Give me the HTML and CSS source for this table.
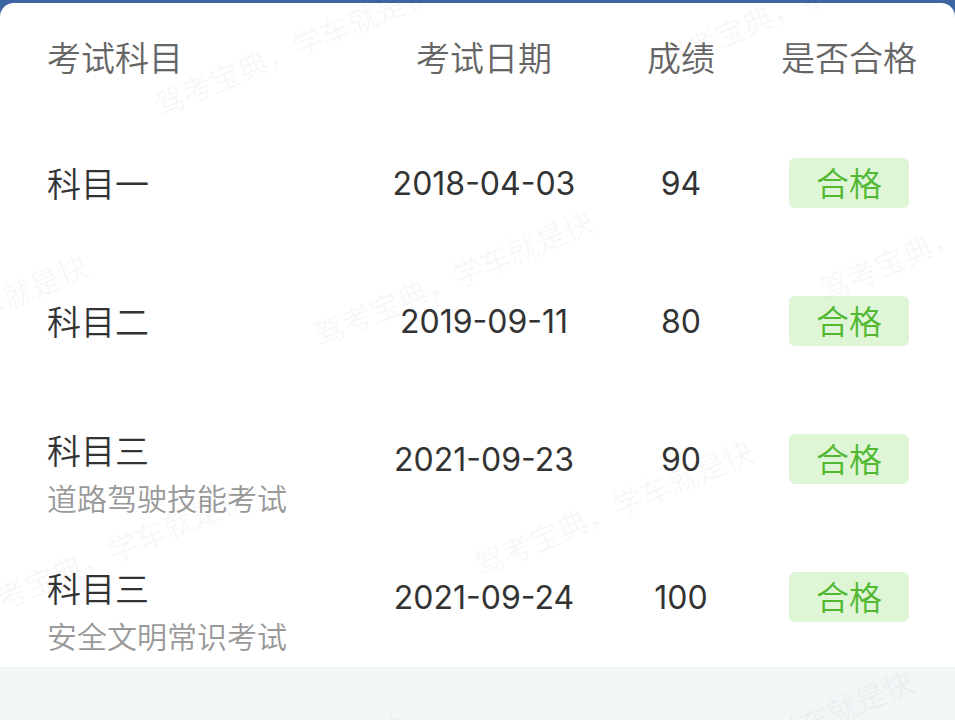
FILE: index.html
```html
<!DOCTYPE html>
<html lang="zh-CN">
<head>
<meta charset="utf-8">
<title>考试成绩</title>
<link rel="stylesheet" href="styles.css">
</head>
<body>
<div class="page">
  <div class="card">
    <div class="row head">
      <div class="cell subject">考试科目</div>
      <div class="cell center">考试日期</div>
      <div class="cell center">成绩</div>
      <div class="cell center">是否合格</div>
    </div>
    <div class="row">
      <div class="cell subject"><div class="main">科目一</div></div>
      <div class="cell center num">2018-04-03</div>
      <div class="cell center num">94</div>
      <div class="cell pass"><span class="badge">合格</span></div>
    </div>
    <div class="row">
      <div class="cell subject"><div class="main">科目二</div></div>
      <div class="cell center num">2019-09-11</div>
      <div class="cell center num">80</div>
      <div class="cell pass"><span class="badge">合格</span></div>
    </div>
    <div class="row">
      <div class="cell subject two"><div class="main">科目三</div><div class="sub">道路驾驶技能考试</div></div>
      <div class="cell center num">2021-09-23</div>
      <div class="cell center num">90</div>
      <div class="cell pass"><span class="badge">合格</span></div>
    </div>
    <div class="row">
      <div class="cell subject two"><div class="main">科目三</div><div class="sub">安全文明常识考试</div></div>
      <div class="cell center num">2021-09-24</div>
      <div class="cell center num">100</div>
      <div class="cell pass"><span class="badge">合格</span></div>
    </div>
  </div>
  <div class="footer-space"></div>

  <div class="watermarks" aria-hidden="true">
    <span class="wm" style="left:155px;top:105px">驾考宝典，学车就是快</span>
    <span class="wm" style="left:660px;top:60px">驾考宝典，学车就是快</span>
    <span class="wm" style="left:315px;top:335px">驾考宝典，学车就是快</span>
    <span class="wm" style="left:820px;top:290px">驾考宝典，学车就是快</span>
    <span class="wm" style="left:-190px;top:380px">驾考宝典，学车就是快</span>
    <span class="wm" style="left:475px;top:565px">驾考宝典，学车就是快</span>
    <span class="wm" style="left:-30px;top:610px">驾考宝典，学车就是快</span>
    <span class="wm" style="left:635px;top:795px">驾考宝典，学车就是快</span>
    <span class="wm" style="left:130px;top:840px">驾考宝典，学车就是快</span>
  </div>
</div>
</body>
</html>
```

FILE: styles.css
```css
* { box-sizing: border-box; }
html, body {
  margin: 0;
  padding: 0;
}
body {
  width: 955px;
  height: 720px;
  overflow: hidden;
  font-family: "Noto Sans CJK SC", "Noto Sans", sans-serif;
  font-weight: 350;
  background: #f3f6f7;
}
.page {
  position: relative;
  height: 720px;
  padding-top: 3px;
  background: linear-gradient(to bottom, #3e66a4 0, #3e66a4 30px, #f3f6f7 30px);
  overflow: hidden;
}
.card {
  background: #ffffff;
  border-radius: 14px 14px 0 0;
  padding-left: 47px;
}
.row {
  display: grid;
  grid-template-columns: 330px 214px 180px 156px;
  align-items: center;
  height: 138px;
  font-size: 34px;
  color: #333333;
}
.row.head {
  height: 112px;
  padding-bottom: 5px;
  color: #666666;
}
.cell { white-space: nowrap; }
.center { text-align: center; }
.pass {
  display: flex;
  justify-content: center;
  padding-bottom: 2px;
}
.num {
  font-family: "Inter", "Noto Sans", sans-serif;
  font-weight: 400;
  font-size: 32px;
  color: #333333;
  padding-bottom: 2px;
}
.main {
  line-height: 44px;
  padding-bottom: 2px;
}
.two {
  padding-top: 22px;
  display: flex;
  flex-direction: column;
  gap: 5px;
}
.sub {
  font-size: 30px;
  line-height: 36px;
  color: #999999;
}
.badge {
  display: block;
  width: 120px;
  height: 50px;
  line-height: 48px;
  border-radius: 6px;
  background: #def5d6;
  color: #52b832;
  font-size: 33px;
  text-align: center;
}
.footer-space {
  height: 53px;
}
.watermarks {
  position: absolute;
  inset: 0;
  pointer-events: none;
}
.wm {
  position: absolute;
  display: block;
  height: 0;
  line-height: 0;
  font-size: 30px;
  white-space: nowrap;
  color: rgba(0, 0, 0, 0.05);
  transform-origin: 0 0;
  transform: rotate(-23deg);
}
```
